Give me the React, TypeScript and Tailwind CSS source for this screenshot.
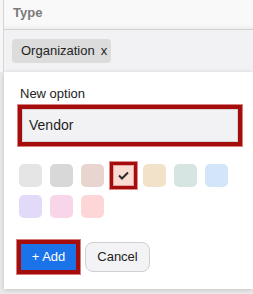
import React from "react";

const swatches = [
  "#e5e5e5",
  "#d8d8d8",
  "#e9d5d0",
  "#fbdcd2",
  "#f3e2ca",
  "#d6e5e1",
  "#d3e5f8",
  "#e3d9f8",
  "#f9d5ea",
  "#fdd7d8",
];

export default function App() {
  return (
    <div
      className="w-[253px] h-[294px] overflow-hidden flex bg-[#ececec]"
      style={{ fontFamily: '"Liberation Sans", Arial, sans-serif' }}
    >
      <div className="w-[4px] flex flex-col shrink-0">
        <div className="h-[72px] bg-[#f6f6f6] border-r border-[#d6d6d6]" />
        <div className="flex-1 bg-[#ebebeb]" />
      </div>
      <div className="flex-1 flex flex-col min-w-0">
        <div className="h-[30px] shrink-0 bg-[#f9f9f9] border-b border-[#d3d3d3] shadow-[inset_0_-4px_4px_-2px_rgba(0,0,0,0.05)] pl-[9px] pt-[3px]">
          <span className="block text-[13px] leading-[20px] font-bold text-[#7a7a7a]">Type</span>
        </div>
        <div className="h-[42px] shrink-0 bg-[#f2f2f4] pl-[8px] pt-[8px]">
          <div className="inline-flex items-center h-[24px] rounded-[4px] bg-[#dcdcdc] pl-[9px] pr-[4px] text-[13px] text-[#1f1f1f]">
            <span>Organization</span>
            <span className="ml-[6px]">x</span>
          </div>
        </div>
        <div className="bg-white shadow-[0_1px_5px_rgba(0,0,0,0.18)] pl-[12px] pt-[14px] pb-[14px] flex flex-col items-start">
          <div className="ml-[4px] text-[13px] leading-[16px] text-[#222]">New option</div>
          <div className="mt-[2px] ml-[1px] w-[226px] border border-[#d98080]">
            <div className="border-[4px] border-[#a50c0c]">
              <div className="h-[33px] bg-[#f2f2f4] border border-[#d5d5d5] flex items-center pl-[6px] text-[14px] text-[#1f1f1f]">
                Vendor
              </div>
            </div>
          </div>
          <div className="mt-[17px] ml-[3px] grid grid-cols-[repeat(7,23px)] gap-[8px]">
            {swatches.map((c, i) =>
              i === 3 ? (
                <div
                  key={i}
                  className="w-[23px] h-[23px] flex items-center justify-center shadow-[inset_0_0_0_1px_#a50c0c,inset_0_0_0_2px_#e7a3a3,0_0_0_2px_#a50c0c,0_0_0_3px_#dc8c8c]"
                  style={{ backgroundColor: c }}
                >
                  <svg width="11" height="9" viewBox="0 0 11 9" fill="none">
                    <path d="M1 4.5 L4 7.5 L10 1.5" stroke="#2a2a2a" strokeWidth="2" />
                  </svg>
                </div>
              ) : (
                <div
                  key={i}
                  className="w-[23px] h-[23px] rounded-[5px]"
                  style={{ backgroundColor: c }}
                />
              )
            )}
          </div>
          <div className="mt-[21px] flex items-center gap-[4px]">
            <div className="border border-[#d77c7c]">
              <div className="border-[4px] border-[#a50c0c]">
                <div className="w-[55px] h-[26px] bg-[#1a73e8] flex items-center justify-center text-[13px] text-white">
                  + Add
                </div>
              </div>
            </div>
            <div className="w-[65px] h-[30px] rounded-[8px] border border-[#cfcfcf] bg-[#f3f3f5] flex items-center justify-center text-[13px] text-[#222]">
              Cancel
            </div>
          </div>
        </div>
      </div>
    </div>
  );
}
